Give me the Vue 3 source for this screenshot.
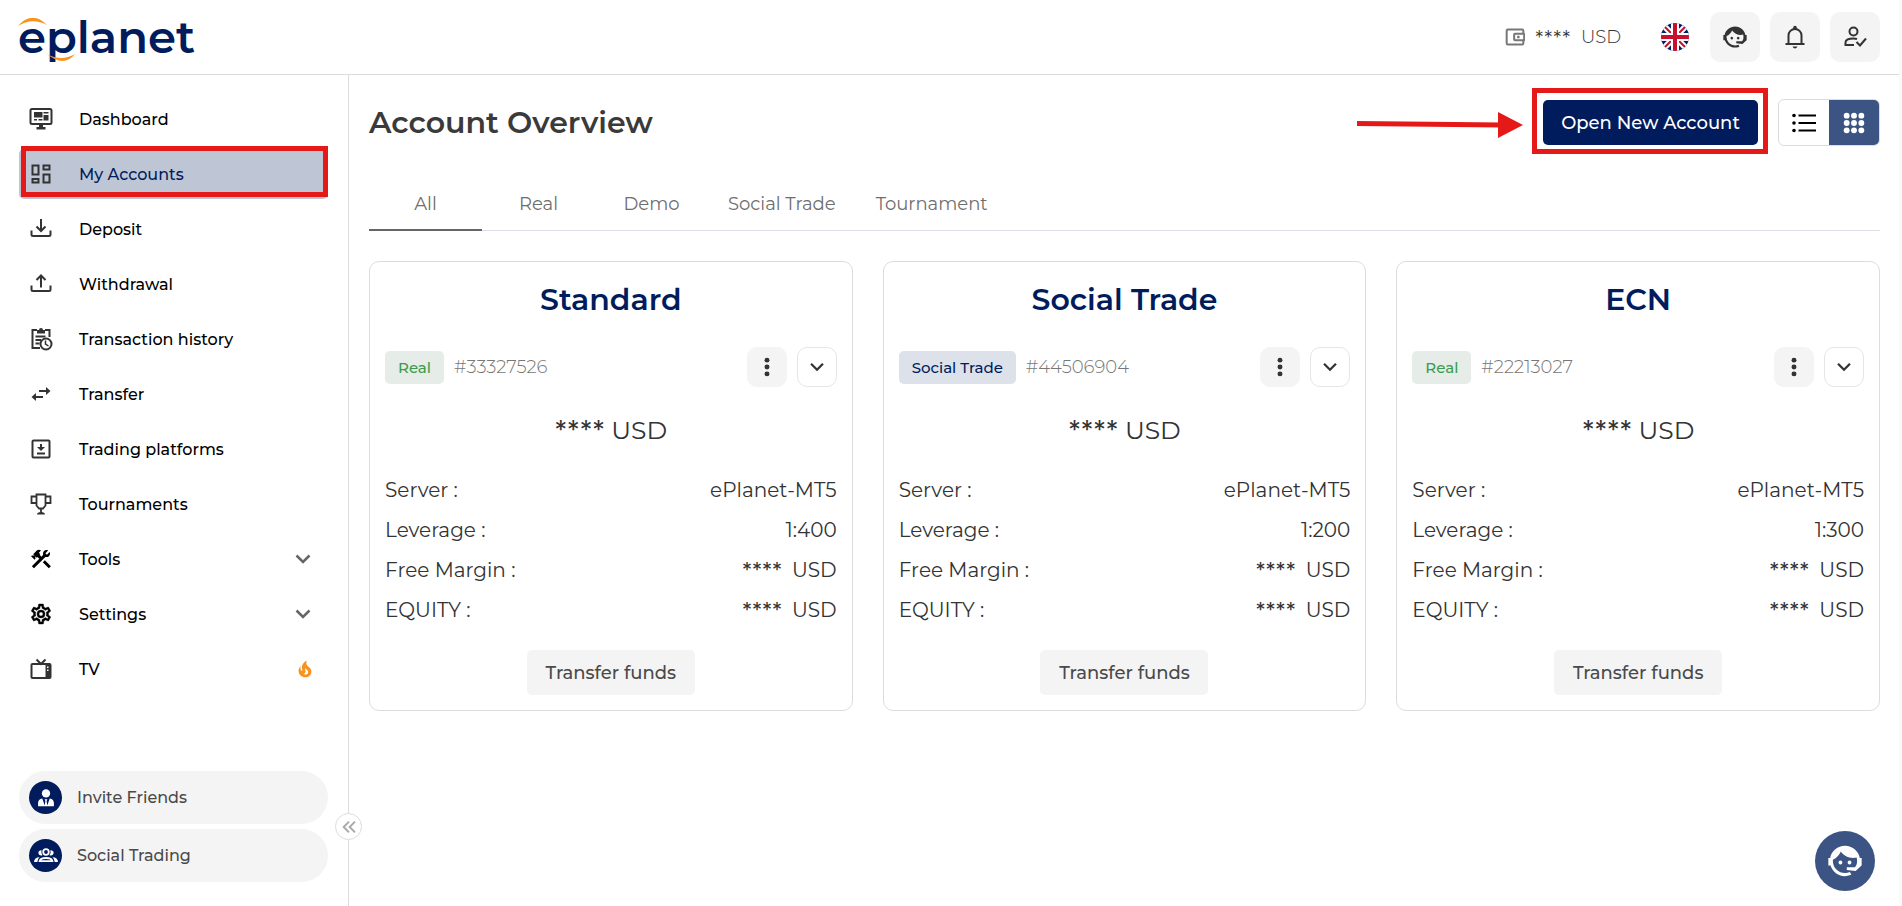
<!-- App.vue -->
<script setup>
import { ref, computed } from 'vue';

const menu = [
    { label: 'Dashboard', icon: 'dashboard' },
    { label: 'My Accounts', icon: 'accounts', active: true },
    { label: 'Deposit', icon: 'deposit' },
    { label: 'Withdrawal', icon: 'withdrawal' },
    { label: 'Transaction history', icon: 'history' },
    { label: 'Transfer', icon: 'transfer' },
    { label: 'Trading platforms', icon: 'platforms' },
    { label: 'Tournaments', icon: 'trophy' },
    { label: 'Tools', icon: 'tools', group: true },
    { label: 'Settings', icon: 'settings', group: true },
    { label: 'TV', icon: 'tv', hot: true }
];

const shortcuts = [
    { label: 'Invite Friends', icon: 'person' },
    { label: 'Social Trading', icon: 'people' }
];

const tabs = ['All', 'Real', 'Demo', 'Social Trade', 'Tournament'];
const activeTab = ref('All');
const view = ref('grid');

const accounts = [
    { name: 'Standard', type: 'Real', number: '33327526', leverage: '1:400' },
    { name: 'Social Trade', type: 'Social Trade', number: '44506904', leverage: '1:200' },
    { name: 'ECN', type: 'Real', number: '22213027', leverage: '1:300' }
];

const visibleAccounts = computed(() =>
    activeTab.value === 'All' ? accounts : accounts.filter((a) => a.type === activeTab.value)
);
</script>

<template>
    <svg class="sprite" aria-hidden="true">
        <symbol id="i-dashboard" viewBox="0 0 24 24">
            <rect x="1.500" y="2" width="21" height="15" rx="1.500" fill="none" stroke="currentColor" stroke-width="2" />
            <path d="M5 5h8.500v5.500H5zM14.500 5H19.500v1.500h-5zM14.500 8H19.500v5.500h-5zM5 12h3v1.500H5zM9.500 12H13.500v1.500H9.500zM10 17h4v3h2.500v2.500h-9V20H10z" fill="currentColor" />
        </symbol>
        <symbol id="i-accounts" viewBox="0 0 24 24">
            <path d="M3.500 3.500h6v9h-6zM14.500 3.500h6v4h-6zM14.500 12.500h6v8h-6zM3.500 17h6v3.500h-6z" fill="none" stroke="currentColor" stroke-width="2" />
        </symbol>
        <symbol id="i-deposit" viewBox="0 0 24 24">
            <path d="M12 2v12M7.500 9.500L12 14l4.500-4.500M2.500 13.500v4q0 1.500 1.500 1.500h16q1.500 0 1.500-1.500v-4" fill="none" stroke="currentColor" stroke-width="2" />
        </symbol>
        <symbol id="i-withdrawal" viewBox="0 0 24 24">
            <path d="M12 15.500V3.500M7.500 8L12 3.500 16.500 8M2.500 13.500v4q0 1.500 1.500 1.500h16q1.500 0 1.500-1.500v-4" fill="none" stroke="currentColor" stroke-width="2" />
        </symbol>
        <symbol id="i-history" viewBox="0 0 24 24">
            <path d="M11 21H3.500V3H8M16 3h4.500v7M6.500 9.500h10M6.500 13H12M6.500 16.500h4" fill="none" stroke="currentColor" stroke-width="2" />
            <path d="M8 3h2a2 2 0 0 1 4 0h2v3.500H8z" fill="currentColor" />
            <circle cx="17" cy="17" r="5.500" fill="none" stroke="currentColor" stroke-width="2" />
            <path d="M16.500 13.500V17l3 2" fill="none" stroke="currentColor" stroke-width="1.500" />
        </symbol>
        <symbol id="i-transfer" viewBox="0 0 24 24">
            <path d="M21.500 9l-4.500-4v3H10v2h7v3M7 11l-4.500 4 4.500 4v-3h7v-2H7z" fill="currentColor" />
        </symbol>
        <symbol id="i-platforms" viewBox="0 0 24 24">
            <rect x="3.500" y="3.500" width="17" height="17" rx="1" fill="none" stroke="currentColor" stroke-width="2" />
            <path d="M11 7h2v3h3l-4 4-4-4h3zM8 15.500h8v2H8z" fill="currentColor" />
        </symbol>
        <symbol id="i-trophy" viewBox="0 0 24 24">
            <path d="M7.500 2.500h9v11l-2.500 3h-4l-2.500-3zM7.500 4.500h-5v6.500h5M16.500 4.500h5v6.500h-5M12 16v5" fill="none" stroke="currentColor" stroke-width="1.800" />
            <path d="M8 22.500q0-2.500 4-2.500t4 2.500z" fill="currentColor" />
        </symbol>
        <symbol id="i-tools" viewBox="0 0 24 24">
            <path d="M13.780 15.300L19.780 21.300L21.890 19.140L15.890 13.140L13.780 15.300M17.500 10.100C17.110 10.100 16.690 10.050 16.360 9.910L4.970 21.250L2.860 19.140L10.270 11.740L8.500 9.960L7.780 10.660L6.330 9.250V12.110L5.630 12.810L2.110 9.250L2.810 8.550H5.630L4.220 7.140L7.780 3.580C8.950 2.410 10.830 2.410 12 3.580L9.890 5.740L11.300 7.140L10.590 7.850L12.380 9.630L14.200 7.750C14.060 7.420 14 7 14 6.630C14 4.660 15.560 3.110 17.500 3.110C18.090 3.110 18.610 3.250 19.080 3.530L16.410 6.200L17.910 7.700L20.580 5.030C20.860 5.500 21 6 21 6.630C21 8.550 19.450 10.100 17.500 10.100Z" fill="currentColor" />
        </symbol>
        <symbol id="i-settings" viewBox="0 0 24 24">
            <path d="M12,8A4,4 0 0,1 16,12A4,4 0 0,1 12,16A4,4 0 0,1 8,12A4,4 0 0,1 12,8M12,10A2,2 0 0,0 10,12A2,2 0 0,0 12,14A2,2 0 0,0 14,12A2,2 0 0,0 12,10M10,22C9.75,22 9.54,21.82 9.5,21.58L9.13,18.93C8.5,18.68 7.96,18.34 7.44,17.94L4.95,18.95C4.73,19.03 4.46,18.95 4.34,18.73L2.34,15.27C2.21,15.05 2.27,14.78 2.46,14.63L4.57,12.97L4.5,12L4.57,11L2.46,9.37C2.27,9.22 2.21,8.95 2.34,8.73L4.34,5.27C4.46,5.05 4.73,4.96 4.95,5.05L7.44,6.05C7.96,5.66 8.5,5.32 9.13,5.07L9.5,2.42C9.54,2.18 9.75,2 10,2H14C14.25,2 14.46,2.18 14.5,2.42L14.87,5.07C15.5,5.32 16.04,5.66 16.56,6.05L19.05,5.05C19.27,4.96 19.54,5.05 19.66,5.27L21.66,8.73C21.79,8.95 21.73,9.22 21.54,9.37L19.43,11L19.5,12L19.43,13L21.54,14.63C21.73,14.78 21.79,15.05 21.66,15.27L19.66,18.73C19.54,18.95 19.27,19.04 19.05,18.95L16.56,17.95C16.04,18.34 15.5,18.68 14.87,18.93L14.5,21.58C14.46,21.82 14.25,22 14,22H10M11.25,4L10.88,6.61C9.68,6.86 8.62,7.5 7.85,8.39L5.44,7.35L4.69,8.65L6.8,10.2C6.4,11.37 6.4,12.64 6.8,13.8L4.68,15.36L5.43,16.66L7.86,15.62C8.63,16.5 9.68,17.14 10.87,17.38L11.24,20H12.76L13.13,17.39C14.32,17.14 15.37,16.5 16.14,15.62L18.57,16.66L19.32,15.36L17.2,13.81C17.6,12.64 17.6,11.37 17.2,10.2L19.31,8.65L18.56,7.35L16.15,8.39C15.38,7.5 14.32,6.86 13.12,6.62L12.75,4H11.25Z" fill="currentColor" stroke="currentColor" stroke-width="0.400" />
        </symbol>
        <symbol id="i-tv" viewBox="0 0 24 24">
            <rect x="2.500" y="7" width="19" height="14" rx="1" fill="none" stroke="currentColor" stroke-width="2" />
            <path d="M7.500 2.500L12 7l4.500-4.500" fill="none" stroke="currentColor" stroke-width="2" />
            <path d="M16.500 7h5v14h-5z" fill="currentColor" />
            <path d="M18 9.500h1.500V11H18zM18 12.500h1.500V14H18z" fill="#fff" />
        </symbol>
        <symbol id="i-fire" viewBox="0 0 24 24">
            <path d="M17.660 11.200C17.430 10.900 17.150 10.640 16.890 10.380C16.220 9.780 15.460 9.350 14.820 8.720C13.330 7.260 13 4.850 13.950 3C13 3.230 12.170 3.750 11.460 4.320C8.870 6.400 7.850 10.070 9.070 13.220C9.110 13.320 9.150 13.420 9.150 13.550C9.150 13.770 9 13.970 8.800 14.050C8.570 14.150 8.330 14.090 8.140 13.930C8.080 13.880 8.040 13.830 8 13.760C6.870 12.330 6.690 10.280 7.450 8.640C5.780 10 4.870 12.300 5 14.470C5.060 14.970 5.120 15.470 5.290 15.970C5.430 16.570 5.700 17.170 6 17.700C7.080 19.430 8.950 20.670 10.960 20.920C13.100 21.190 15.390 20.800 17.030 19.320C18.860 17.660 19.500 15 18.560 12.720L18.430 12.460C18.220 12 17.660 11.200 17.660 11.200M14.500 17.500C14.220 17.740 13.760 18 13.400 18.100C12.280 18.500 11.160 17.940 10.500 17.280C11.690 17 12.400 16.120 12.610 15.230C12.780 14.430 12.460 13.770 12.330 13C12.210 12.260 12.230 11.630 12.500 10.940C12.690 11.320 12.890 11.700 13.130 12C13.900 13 15.110 13.440 15.370 14.800C15.410 14.940 15.430 15.080 15.430 15.230C15.460 16.050 15.100 16.950 14.500 17.500Z" fill="currentColor" />
        </symbol>
        <symbol id="i-chevron" viewBox="0 0 24 24">
            <path d="M5.500 8.500L12 15l6.500-6.500" fill="none" stroke="currentColor" stroke-width="2.500" />
        </symbol>
        <symbol id="i-collapse" viewBox="0 0 24 24">
            <path d="M12 4l-8 8 8 8M21 4l-8 8 8 8" fill="none" stroke="currentColor" stroke-width="3" />
        </symbol>
        <symbol id="i-person" viewBox="0 0 24 24">
            <circle cx="12" cy="6.500" r="5" fill="currentColor" />
            <path d="M2.500 22v-4q0-4.500 5-5.500l3 8.500.8-5.500-1-2h3.400l-1 2 .8 5.500 3-8.500q5 1 5 5.500v4z" fill="currentColor" />
        </symbol>
        <symbol id="i-people" viewBox="0 0 24 24">
            <circle cx="12" cy="8" r="2.800" fill="none" stroke="currentColor" stroke-width="1.800" />
            <path d="M7.600 6.300q-.8 2.700.9 5-3.800 1-4.200-2.200.3-3 3.300-2.800zM16.400 6.300q.8 2.700-.9 5 3.800 1 4.200-2.200-.3-3-3.300-2.800z" fill="currentColor" />
            <path d="M0 18q.3-4.600 5.500-4.800Q3.500 15 3.300 18zM24 18q-.3-4.600-5.500-4.800 2 1.800 2.200 4.800z" fill="currentColor" />
            <path d="M5.600 17.200q.6-3.200 6.400-3.200t6.400 3.200z" fill="none" stroke="currentColor" stroke-width="1.800" />
        </symbol>
        <symbol id="i-wallet" viewBox="0 0 24 24">
            <path d="M22 8V4.500Q22 3 20.500 3h-17Q2 3 2 4.500v15Q2 21 3.500 21h17q1.500 0 1.500-1.500V16" fill="none" stroke="currentColor" stroke-width="2.400" />
            <rect x="11" y="8" width="12" height="8" rx="1" fill="none" stroke="currentColor" stroke-width="2.400" />
            <rect x="14.500" y="10.500" width="3" height="3" rx="1" fill="currentColor" />
        </symbol>
        <symbol id="i-agent" viewBox="0 0 24 24">
            <path d="M18.720,14.760C19.070,13.910 19.260,13 19.260,12C19.260,11.280 19.150,10.590 18.960,9.950C18.310,10.100 17.630,10.180 16.920,10.180C13.860,10.180 11.150,8.670 9.500,6.340C8.610,8.500 6.910,10.260 4.770,11.220C4.730,11.470 4.730,11.740 4.730,12A7.270,7.270 0 0,0 12,19.270C13.050,19.270 14.060,19.040 14.970,18.630C15.540,19.720 15.800,20.260 15.780,20.260C14.140,20.810 12.870,21.080 12,21.080C9.580,21.080 7.270,20.130 5.570,18.420C4.530,17.380 3.760,16.110 3.330,14.730H2V10.180H3.090C3.930,6.040 7.600,2.920 12,2.920C14.400,2.920 16.710,3.870 18.420,5.580C19.690,6.840 20.540,8.450 20.890,10.180H22V14.730H21.940L18.380,18L13.080,17.400V15.730H17.910L18.720,14.760M9.270,11.770A1.140,1.140 0 1,1 9.260,11.770M14.720,11.770A1.140,1.140 0 1,1 14.710,11.770Z" fill="currentColor" />
        </symbol>
        <symbol id="i-bell" viewBox="0 0 24 24">
            <path d="M5.500 19v-8.500a6.500 6.500 0 0 1 13 0V19M2.500 19h19" fill="none" stroke="currentColor" stroke-width="2" />
            <path d="M10.200 4V2.500a1.800 1.800 0 0 1 3.600 0V4zM9.500 21.500h5q-.8 2-2.500 2t-2.500-2z" fill="currentColor" />
        </symbol>
        <symbol id="i-user" viewBox="0 0 24 24">
            <circle cx="10.500" cy="6.500" r="4" fill="none" stroke="currentColor" stroke-width="2" />
            <path d="M11 20H2.500v-2.500q0-4 8-4 2 0 3.500.5M13.500 17l3.500 3.500 6-7" fill="none" stroke="currentColor" stroke-width="2" />
        </symbol>
        <symbol id="i-list" viewBox="0 0 24 24">
            <path d="M6.500 4.500H24M6.500 12H24M6.500 19.500H24" fill="none" stroke="currentColor" stroke-width="2" />
            <circle cx="2" cy="4.500" r="1.800" fill="currentColor" />
            <circle cx="2" cy="12" r="1.800" fill="currentColor" />
            <circle cx="2" cy="19.500" r="1.800" fill="currentColor" />
        </symbol>
        <symbol id="i-grid" viewBox="0 0 24 24">
            <g fill="currentColor">
                <circle cx="4" cy="4" r="3.200" /><circle cx="12" cy="4" r="3.200" /><circle cx="20" cy="4" r="3.200" />
                <circle cx="4" cy="12" r="3.200" /><circle cx="12" cy="12" r="3.200" /><circle cx="20" cy="12" r="3.200" />
                <circle cx="4" cy="20" r="3.200" /><circle cx="12" cy="20" r="3.200" /><circle cx="20" cy="20" r="3.200" />
            </g>
        </symbol>
        <symbol id="i-dots" viewBox="0 0 24 24">
            <g fill="currentColor">
                <circle cx="12" cy="4.500" r="2.700" /><circle cx="12" cy="12" r="2.700" /><circle cx="12" cy="19.500" r="2.700" />
            </g>
        </symbol>
    </svg>

    <div class="page">
        <header class="topbar">
            <a href="#" class="logo" aria-label="eplanet">
                <span class="logo-text">eplanet</span>
                <svg class="logo-arcs" viewBox="0 0 174 44">
                    <path d="M0 8Q14-8 29 7 14-1 0 8z" fill="#f7931e" />
                    <path d="M29 36q14 8 28 0-11 14-28 0z" fill="#f7931e" />
                </svg>
            </a>
            <div class="topbar-right">
                <div class="wallet">
                    <svg class="icon wallet-icon"><use href="#i-wallet" /></svg>
                    <span class="stars">****</span>
                    <span>USD</span>
                </div>
                <button type="button" class="flag" aria-label="English">
                    <svg viewBox="0 0 28 28">
                        <clipPath id="round"><circle cx="14" cy="14" r="14" /></clipPath>
                        <g clip-path="url(#round)">
                            <path d="M0 0h28v28H0z" fill="#012169" />
                            <path d="M0 0l28 28M28 0L0 28" stroke="#fff" stroke-width="6" />
                            <path d="M0 0l28 28M28 0L0 28" stroke="#c8102e" stroke-width="2" />
                            <path d="M14 0v28M0 14h28" stroke="#fff" stroke-width="8" />
                            <path d="M14 0v28M0 14h28" stroke="#c8102e" stroke-width="4" />
                        </g>
                    </svg>
                </button>
                <div class="actions">
                    <button type="button" class="action" aria-label="Support"><svg class="icon agent-icon"><use href="#i-agent" /></svg></button>
                    <button type="button" class="action" aria-label="Notifications"><svg class="icon"><use href="#i-bell" /></svg></button>
                    <button type="button" class="action" aria-label="Profile"><svg class="icon"><use href="#i-user" /></svg></button>
                </div>
            </div>
        </header>

        <div class="body">
            <aside class="sidebar">
                <nav class="menu">
                    <a v-for="item in menu" :key="item.label" href="#" class="menu-item"
                        :class="{ active: item.active, group: item.group }">
                        <svg class="icon"><use :href="'#i-' + item.icon" /></svg>
                        <span class="menu-label">{{ item.label }}</span>
                        <svg v-if="item.group" class="icon chevron"><use href="#i-chevron" /></svg>
                        <svg v-if="item.hot" class="icon fire"><use href="#i-fire" /></svg>
                    </a>
                </nav>
                <div class="shortcuts">
                    <a v-for="item in shortcuts" :key="item.label" href="#" class="shortcut">
                        <span class="shortcut-icon"><svg class="icon" :class="item.icon"><use :href="'#i-' + item.icon" /></svg></span>
                        {{ item.label }}
                    </a>
                </div>
                <button type="button" class="collapse" aria-label="Collapse menu">
                    <svg class="icon"><use href="#i-collapse" /></svg>
                </button>
            </aside>

            <main class="content">
                <div class="toolbar">
                    <h1>Account Overview</h1>
                    <svg class="arrow" viewBox="0 0 166 26">
                        <path d="M0 11.500L145 13" stroke="#e61919" stroke-width="5" />
                        <path d="M141 0l25 13-25 13z" fill="#e61919" />
                    </svg>
                    <button type="button" class="open-account">Open New Account</button>
                    <div class="view-switch">
                        <button type="button" :class="{ on: view === 'list' }" aria-label="List view" @click="view = 'list'">
                            <svg class="icon"><use href="#i-list" /></svg>
                        </button>
                        <button type="button" :class="{ on: view === 'grid' }" aria-label="Grid view" @click="view = 'grid'">
                            <svg class="icon grid-icon"><use href="#i-grid" /></svg>
                        </button>
                    </div>
                </div>

                <div class="tabs">
                    <button v-for="tab in tabs" :key="tab" type="button" class="tab"
                        :class="{ active: tab === activeTab }" @click="activeTab = tab">{{ tab }}</button>
                </div>

                <div class="cards" :class="view">
                    <article v-for="account in visibleAccounts" :key="account.number" class="card">
                        <h2>{{ account.name }}</h2>
                        <div class="card-head">
                            <span class="badge" :class="{ social: account.type !== 'Real' }">{{ account.type }}</span>
                            <span class="number">#{{ account.number }}</span>
                            <button type="button" class="square more" aria-label="More"><svg class="icon"><use href="#i-dots" /></svg></button>
                            <button type="button" class="square" aria-label="Expand"><svg class="icon"><use href="#i-chevron" /></svg></button>
                        </div>
                        <div class="balance"><span class="stars">****</span> USD</div>
                        <dl>
                            <div><dt>Server :</dt><dd>ePlanet-MT5</dd></div>
                            <div><dt>Leverage :</dt><dd>{{ account.leverage }}</dd></div>
                            <div><dt>Free Margin :</dt><dd><span class="stars">****</span><span>USD</span></dd></div>
                            <div><dt>EQUITY :</dt><dd><span class="stars">****</span><span>USD</span></dd></div>
                        </dl>
                        <button type="button" class="transfer">Transfer funds</button>
                    </article>
                </div>
            </main>
        </div>

        <button type="button" class="support" aria-label="Live support">
            <svg class="icon"><use href="#i-agent" /></svg>
        </button>
    </div>
</template>

<style>
body {
    margin: 0;
    background: #fff;
}
</style>

<style scoped>
.sprite {
    position: absolute;
    width: 0;
    height: 0;
}

.page {
    display: flex;
    flex-direction: column;
    min-height: 100vh;
    box-sizing: border-box;
    border-right: 3px solid #fafafa;
    font-family: Montserrat, Inter, "Open Sans", sans-serif;
    color: #333;
}

button {
    padding: 0;
    border: 0;
    background: none;
    font: inherit;
    color: inherit;
    cursor: pointer;
}

a {
    color: inherit;
    text-decoration: none;
}

.icon {
    display: block;
    flex: none;
    width: 24px;
    height: 24px;
}

/* masked amounts */
.stars {
    font-family: Inter, sans-serif;
}

/* top bar */
.topbar {
    display: flex;
    align-items: center;
    justify-content: space-between;
    height: 74px;
    padding: 0 19px 0 18px;
    border-bottom: 1px solid #dcdcdc;
}

.logo {
    position: relative;
    color: #001c5c;
}

.logo-text {
    display: block;
    font-size: 45px;
    font-weight: 600;
    line-height: 60px;
}

.logo-arcs {
    position: absolute;
    top: 11px;
    left: 0;
    width: 174px;
    height: 44px;
}

.topbar-right {
    display: flex;
    align-items: center;
}

.wallet {
    display: flex;
    align-items: center;
    gap: 10px;
    margin-right: 40px;
    font-size: 18px;
    font-weight: 300;
}

.wallet-icon {
    width: 20px;
    height: 20px;
    color: #777;
}

.flag {
    width: 28px;
    height: 28px;
    margin-right: 21px;
}

.flag svg {
    display: block;
}

.actions {
    display: flex;
    gap: 10px;
}

.action {
    display: grid;
    place-items: center;
    width: 50px;
    height: 50px;
    border-radius: 10px;
    background: #f4f4f4;
}

.agent-icon {
    width: 28px;
    height: 28px;
}

/* side menu */
.body {
    display: flex;
    flex: 1;
}

.sidebar {
    position: relative;
    display: flex;
    flex-direction: column;
    flex: none;
    width: 349px;
    box-sizing: border-box;
    padding: 19px 20px 24px 19px;
    border-right: 1px solid #dcdcdc;
}

.menu {
    display: flex;
    flex-direction: column;
    gap: 5px;
}

.menu-item {
    position: relative;
    display: flex;
    align-items: center;
    height: 50px;
    padding: 0 12px 0 10px;
    border-radius: 5px;
    font-size: 16px;
    font-weight: 500;
}

.menu-label {
    flex: 1;
    margin-left: 26px;
    color: #000;
}

.menu-item.group {
    color: #000;
}

.menu-item.active {
    background: #bec6d6;
}

.menu-item.active .menu-label {
    color: #001c5c;
}

.menu-item.active::after {
    content: "";
    position: absolute;
    inset: -3px 0 2px 2px;
    border: 5px solid #e61919;
}

.chevron {
    width: 26px;
    color: #666;
}

.fire {
    width: 22px;
    height: 22px;
    color: #f7931e;
}

.shortcuts {
    display: flex;
    flex-direction: column;
    gap: 5px;
    margin-top: auto;
}

.shortcut {
    display: flex;
    align-items: center;
    gap: 15px;
    height: 53px;
    padding: 0 10px;
    border-radius: 27px;
    background: #f4f4f4;
    font-size: 16px;
    font-weight: 500;
    color: #4a4a4a;
}

.shortcut-icon {
    display: grid;
    place-items: center;
    width: 33px;
    height: 33px;
    border-radius: 50%;
    background: #001c5c;
    color: #fff;
}

.shortcut-icon .person {
    width: 20px;
    height: 20px;
}

.collapse {
    position: absolute;
    right: -14px;
    bottom: 66px;
    display: grid;
    place-items: center;
    width: 27px;
    height: 27px;
    box-sizing: border-box;
    border: 1px solid #dcdcdc;
    border-radius: 50%;
    background: #fff;
    color: #aaa;
}

.collapse .icon {
    width: 16px;
    height: 16px;
}

/* content */
.content {
    flex: 1;
    min-width: 0;
    padding: 24px 19px 24px 20px;
}

.toolbar {
    display: flex;
    align-items: center;
    height: 47px;
}

h1 {
    margin: 0 auto 0 0;
    font-size: 30px;
    font-weight: 600;
    line-height: 40px;
    color: #3a3a3a;
}

.arrow {
    width: 166px;
    height: 26px;
    margin: 4px 20px 0 0;
}

.open-account {
    position: relative;
    width: 215px;
    height: 45px;
    margin-right: 20px;
    border-radius: 5px;
    background: #001c5c;
    font-size: 18px;
    font-weight: 500;
    color: #fff;
}

.open-account::after {
    content: "";
    position: absolute;
    inset: -12px -10px -9px -11px;
    border: 5px solid #e61919;
}

.view-switch {
    display: flex;
    box-sizing: border-box;
    height: 47px;
    overflow: hidden;
    border: 1px solid #dcdcdc;
    border-radius: 6px;
    color: #000;
}

.view-switch button {
    display: grid;
    place-items: center;
    width: 50px;
}

.view-switch .on {
    background: #3c5483;
    color: #fff;
}

.grid-icon {
    width: 22px;
    height: 22px;
}

.tabs {
    display: flex;
    margin: 31px 0 30px;
    box-shadow: inset 0 -1px #dce0e6;
}

.tab {
    min-width: 113px;
    height: 54px;
    padding: 2px 20px 0;
    border-bottom: 2px solid transparent;
    font-size: 18px;
    color: #6e6e6e;
}

.tab.active {
    border-color: #666;
}

.cards {
    display: grid;
    grid-template-columns: repeat(3, 1fr);
    gap: 30px;
}

.cards.list {
    grid-template-columns: 1fr;
}

.card {
    padding: 15px;
    border: 1px solid #dcdcdc;
    border-radius: 10px;
}

h2 {
    margin: 0;
    font-size: 30px;
    font-weight: 600;
    line-height: 46px;
    text-align: center;
    color: #001c5c;
}

.card-head {
    display: flex;
    align-items: center;
    gap: 10px;
    margin-top: 24px;
}

.badge {
    padding: 0 13px;
    border-radius: 5px;
    background: #e6ece8;
    font-size: 15px;
    font-weight: 500;
    line-height: 33px;
    color: #3a9d4e;
}

.badge.social {
    background: #dde1ea;
    color: #001c5c;
}

.number {
    margin-right: auto;
    font-size: 18px;
    font-weight: 300;
    color: #777;
}

.square {
    display: grid;
    place-items: center;
    width: 40px;
    height: 40px;
    box-sizing: border-box;
    border: 1px solid #e6e6e6;
    border-radius: 10px;
}

.square .icon {
    width: 22px;
    height: 22px;
}

.square.more {
    border-color: #f4f4f4;
    background: #f4f4f4;
}

.balance {
    margin-top: 25px;
    font-size: 25px;
    line-height: 36px;
    text-align: center;
}

dl {
    margin: 22px 0 20px;
}

dl div {
    display: flex;
    justify-content: space-between;
    font-size: 20px;
    line-height: 40px;
    color: #333;
}

dd {
    display: flex;
    gap: 10px;
    margin: 0;
}

.transfer {
    display: block;
    width: 168px;
    height: 45px;
    margin: 0 auto;
    border-radius: 5px;
    background: #f4f4f4;
    font-size: 18px;
    font-weight: 500;
    color: #4a4a4a;
}

.support {
    position: fixed;
    right: 27px;
    bottom: 15px;
    display: grid;
    place-items: center;
    width: 60px;
    height: 60px;
    border-radius: 50%;
    background: #3c5483;
    color: #fff;
}

.support .icon {
    width: 40px;
    height: 40px;
}
</style>
